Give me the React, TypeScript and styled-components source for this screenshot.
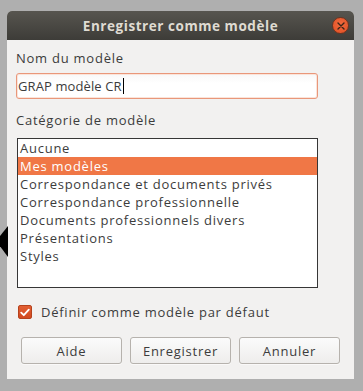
import React from "react";
import styled, { createGlobalStyle } from "styled-components";

const Global = createGlobalStyle`
  html, body { margin: 0; padding: 0; background: #afafaf; }
  body { font-family: "Open Sans", "Noto Sans", "DejaVu Sans", sans-serif; }
  * { box-sizing: border-box; }
`;

const Stage = styled.div`
  position: relative;
  width: 363px;
  height: 391px;
  padding: 11px 0 0 7px;
  background: #afafaf;
  overflow: hidden;
`;

const Pointer = styled.svg`
  position: absolute;
  left: 0;
  top: 222px;
`;

const Dialog = styled.div`
  width: 347px;
  height: 368px;
  background: #f2f1f0;
  border-radius: 5px 5px 0 0;
  display: flex;
  flex-direction: column;
  color: #3c3c3c;
  font-size: 13px;
  letter-spacing: 0.75px;
`;

const TitleBar = styled.div`
  position: relative;
  height: 29px;
  flex: none;
  border-radius: 5px 5px 0 0;
  background: linear-gradient(#57554f, #3d3c38);
  display: flex;
  align-items: center;
  justify-content: center;
  color: #dfdbd2;
  font-weight: 700;
  font-size: 13.5px;
  letter-spacing: 0.55px;
`;

const CloseButton = styled.div`
  position: absolute;
  right: 5px;
  top: 6px;
  width: 17px;
  height: 17px;
  border-radius: 50%;
  background: radial-gradient(circle at 50% 40%, #f26a3e, #df4f23);
  border: 1px solid #6e3320;
  display: flex;
  align-items: center;
  justify-content: center;
`;

const Content = styled.div`
  display: flex;
  flex-direction: column;
  padding: 8px 0 15px 9px;
  flex: 1;
`;

const Label = styled.div<{ $top?: number }>`
  height: 20px;
  line-height: 20px;
  margin-top: ${(p) => p.$top ?? 0}px;
  white-space: nowrap;
`;

const Input = styled.div`
  margin-top: 5px;
  height: 26px;
  width: 302px;
  border: 1px solid #e9977a;
  border-radius: 3px;
  background: linear-gradient(#f8f8f8, #ffffff 40%);
  box-shadow: inset 0 0 0 1px #fbe4da;
  display: flex;
  align-items: center;
  padding-left: 1px;
  white-space: nowrap;
  letter-spacing: 0.1px;
`;

const Caret = styled.span`
  display: inline-block;
  width: 1px;
  height: 16px;
  background: #000;
  margin-left: 1px;
`;

const List = styled.div`
  margin-top: 8px;
  margin-left: 1px;
  width: 301px;
  height: 150px;
  border: 1px solid #363636;
  background: #ffffff;
  display: flex;
  flex-direction: column;
`;

const Row = styled.div<{ $selected?: boolean }>`
  height: 18px;
  line-height: 18px;
  padding-left: 2px;
  white-space: nowrap;
  background: ${(p) => (p.$selected ? "#f07746" : "transparent")};
  color: ${(p) => (p.$selected ? "#ffffff" : "#3c3c3c")};
`;

const CheckRow = styled.div`
  margin-top: 14px;
  height: 20px;
  display: flex;
  align-items: center;
  gap: 9px;
  padding-left: 2px;
  white-space: nowrap;
`;

const CheckBox = styled.div`
  flex: none;
  width: 14px;
  height: 14px;
  border-radius: 2px;
  background: linear-gradient(#e25f33, #d2491f);
  border: 1px solid #b5421d;
  display: flex;
  align-items: center;
  justify-content: center;
`;

const Buttons = styled.div`
  margin-top: 15px;
  margin-left: 5px;
  display: flex;
  gap: 8px;
`;

const Button = styled.div`
  flex: none;
  width: 101px;
  height: 27px;
  border: 1px solid #b6b2ad;
  border-radius: 3px;
  background: linear-gradient(#fbfbfb, #eeedec);
  box-shadow: 0 1px 0 rgba(255, 255, 255, 0.6);
  display: flex;
  align-items: center;
  justify-content: center;
  color: #3c3c3c;
`;

const categories = [
  "Aucune",
  "Mes modèles",
  "Correspondance et documents privés",
  "Correspondance professionnelle",
  "Documents professionnels divers",
  "Présentations",
  "Styles",
];

export default function App() {
  return (
    <>
      <Global />
      <Stage>
        <Pointer width="8" height="40" viewBox="0 0 8 40">
          <polygon points="8,4 8,35 -4,19" fill="#000" />
        </Pointer>
        <Dialog>
          <TitleBar>
            Enregistrer comme modèle
            <CloseButton>
              <svg width="8" height="8" viewBox="0 0 8 8">
                <path d="M1 1 L7 7 M7 1 L1 7" stroke="#3a2418" strokeWidth="1.4" strokeLinecap="round" />
              </svg>
            </CloseButton>
          </TitleBar>
          <Content>
            <Label>Nom du modèle</Label>
            <Input>
              GRAP modèle CR
              <Caret />
            </Input>
            <Label $top={11}>Catégorie de modèle</Label>
            <List>
              {categories.map((c) => (
                <Row key={c} $selected={c === "Mes modèles"}>
                  {c}
                </Row>
              ))}
            </List>
            <CheckRow>
              <CheckBox>
                <svg width="10" height="9" viewBox="0 0 10 9">
                  <path d="M1.2 4.6 L3.8 7.2 L8.8 1.6" stroke="#fff" strokeWidth="1.8" fill="none" strokeLinecap="round" strokeLinejoin="round" />
                </svg>
              </CheckBox>
              Définir comme modèle par défaut
            </CheckRow>
            <Buttons>
              <Button>Aide</Button>
              <Button>Enregistrer</Button>
              <Button>Annuler</Button>
            </Buttons>
          </Content>
        </Dialog>
      </Stage>
    </>
  );
}
